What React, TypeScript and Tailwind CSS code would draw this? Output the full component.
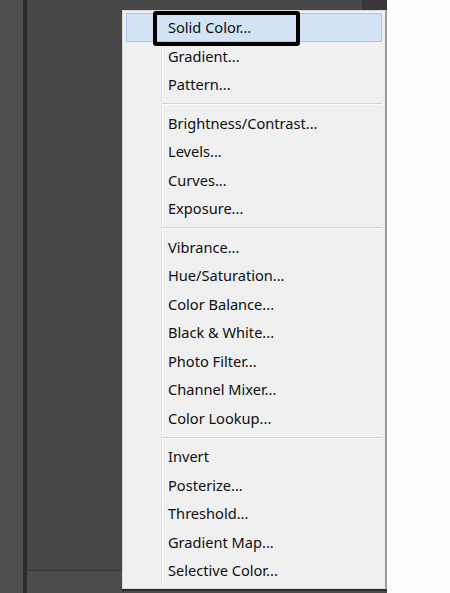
const groups: string[][] = [
  ['Solid Color...', 'Gradient...', 'Pattern...'],
  ['Brightness/Contrast...', 'Levels...', 'Curves...', 'Exposure...'],
  ['Vibrance...', 'Hue/Saturation...', 'Color Balance...', 'Black & White...', 'Photo Filter...', 'Channel Mixer...', 'Color Lookup...'],
  ['Invert', 'Posterize...', 'Threshold...', 'Gradient Map...', 'Selective Color...'],
]

function MenuItem({ label, active }: { label: string; active?: boolean }) {
  return (
    <div
      className={
        active
          ? 'relative z-10 flex h-[29px] items-center border border-[#a9c6e8] bg-[#d1e3f5] pl-[41px]'
          : 'relative z-10 flex h-[28.5px] items-center pl-[42px]'
      }
    >
      <span className="text-[14.6px] leading-none text-[#0f0f0f]">{label}</span>
    </div>
  )
}

function Separator() {
  return (
    <div className="relative z-10 flex h-[10px] flex-col justify-center pl-[36px]">
      <div className="h-px bg-[#d4d4d4]" />
      <div className="h-px bg-[#fbfbfb]" />
    </div>
  )
}

export default function App() {
  return (
    <div className="flex h-[593px] w-[450px] bg-[#fdfdfd]" style={{ fontFamily: '"Noto Sans", "Open Sans", sans-serif' }}>
      <div className="w-[23px] bg-[#4f4f4f]" />
      <div className="w-[4px] bg-[#2c2c2c]" />
      <div className="relative flex w-[360px] flex-col bg-[#474747]">
        <div className="flex h-[10px]">
          <div className="flex-1" />
          <div className="w-[25px] bg-[#383838]" />
        </div>
        <div className="flex-1" />
        <div className="h-px bg-[#363636]" />
        <div className="h-[22px] bg-[#4b4b4b]" />

        {/* adjustment layer dropdown */}
        <div className="absolute left-[95px] top-[10px] w-[265px] border border-[#d9d9d9] border-r-2 border-r-[#9a9a9a] bg-[#f0f0f0] px-[3px] pt-[2px] pb-[3px] shadow-[0_2px_0_#2e2e2e]">
          <div className="absolute bottom-[3px] left-[39px] top-[33px] w-px bg-[#fcfcfc]" />
          <div className="absolute bottom-[3px] left-[38px] top-[33px] w-px bg-[#e2e2e2]" />
          {groups.map((g, gi) => (
            <div key={gi}>
              {gi > 0 && <Separator />}
              {g.map((label) => (
                <MenuItem key={label} label={label} active={label === 'Solid Color...'} />
              ))}
            </div>
          ))}
          <div className="absolute left-[30px] top-0 z-20 h-[35px] w-[147px] rounded-[3px] border-[4px] border-black" />
        </div>
      </div>
    </div>
  )
}
